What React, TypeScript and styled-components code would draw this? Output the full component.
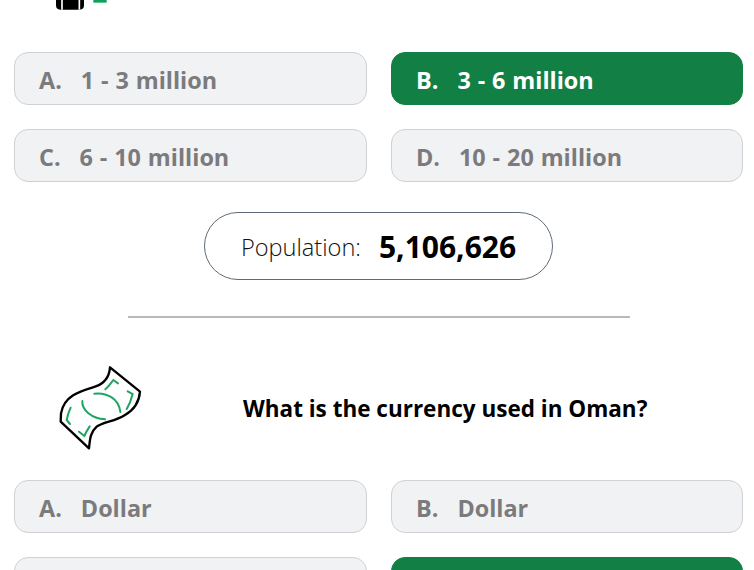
import React from "react";
import styled, { createGlobalStyle } from "styled-components";

const GlobalStyle = createGlobalStyle`
  html, body {
    margin: 0;
    padding: 0;
    background: #fff;
    height: 570px;
    overflow: hidden;
    font-family: "Open Sans", "Noto Sans", sans-serif;
  }
`;

const Page = styled.div`
  height: 648px;
  margin-top: -78px;
  padding: 0 11px 0 14px;
  overflow: hidden;
`;

const Header = styled.div`
  display: flex;
  align-items: center;
  gap: 83px;
  height: 116px;
  padding-left: 26px;
  margin-bottom: 14px;
`;

const IconBox = styled.svg`
  width: 120px;
  height: 116px;
  flex: none;
`;

const Question = styled.h2`
  margin: 0;
  color: #000;
  font-size: 22.5px;
  font-weight: 700;
`;

const Options = styled.div`
  display: grid;
  grid-template-columns: 353px 352px;
  gap: 24px;
`;

const Option = styled.div<{ $selected?: boolean }>`
  display: flex;
  align-items: center;
  gap: 19px;
  box-sizing: border-box;
  height: 53px;
  padding: 2px 0 0 24px;
  border-radius: 14px;
  border: 1px solid ${(p) => (p.$selected ? "#128045" : "#d0d1d4")};
  background: ${(p) => (p.$selected ? "#128045" : "#f1f2f4")};
  color: ${(p) => (p.$selected ? "#fff" : "#7b7b7d")};
  font-size: 23.4px;
  font-weight: 700;
  word-spacing: 0.8px;
`;

const Pill = styled.div`
  display: flex;
  align-items: center;
  justify-content: center;
  gap: 18px;
  box-sizing: border-box;
  width: 349px;
  height: 68px;
  margin: 30px auto 0;
  padding-top: 1px;
  border: 1px solid #5f6b76;
  border-radius: 34px;
`;

const PillLabel = styled.span`
  font-size: 23.6px;
  font-weight: 300;
  color: #111;
`;

const PillValue = styled.span`
  font-size: 30px;
  font-weight: 700;
  color: #000;
`;

const Divider = styled.hr`
  width: 502px;
  height: 2px;
  margin: 36px auto 32px;
  border: 0;
  background: #b9b9b9;
`;

function TopIcon() {
  return (
    <IconBox viewBox="0 0 360 348">
      <path d="M48 200h84v50q0 13-13 13H61q-13 0-13-13z" fill="#000" />
      <path d="M66 225v38M118 225v38" stroke="#fff" strokeWidth="5" />
      <rect x="160" y="200" width="40" height="42" fill="#12a05a" />
    </IconBox>
  );
}

function MoneyIcon() {
  return (
    <IconBox viewBox="0 0 360 348">
      <path
        d="M210 52C208 80 195 100 165 110C125 122 72 135 63 190L62 215L147 295C150 268 150 248 170 230C190 215 225 215 255 195C285 178 298 150 300 125Z"
        fill="#fff"
        stroke="#000"
        strokeWidth="7"
        strokeLinejoin="round"
      />
      <g fill="none" stroke="#1fa463" strokeWidth="6" strokeLinecap="round">
        <path d="M196 118C206 110 212 100 220 90L234 100" />
        <path d="M263 124L278 132C274 148 268 164 260 177" />
        <path d="M163 131C200 127 236 145 241 186" />
        <path d="M127 153C125 180 155 205 195 208" />
        <path d="M92 173C86 186 82 198 80 210L90 222" />
        <path d="M117 245L133 258C138 246 143 238 149 229" />
      </g>
    </IconBox>
  );
}

type Item = { label?: string; text?: string; selected?: boolean };

const first: Item[] = [
  { label: "A.", text: "1 - 3 million" },
  { label: "B.", text: "3 - 6 million", selected: true },
  { label: "C.", text: "6 - 10 million" },
  { label: "D.", text: "10 - 20 million" },
];

// the last row runs off the bottom of the frame, only its top edge shows
const second: Item[] = [
  { label: "A.", text: "Dollar" },
  { label: "B.", text: "Dollar" },
  {},
  { selected: true },
];

function OptionGrid({ items }: { items: Item[] }) {
  return (
    <Options>
      {items.map((item, i) => (
        <Option key={i} $selected={item.selected}>
          <span>{item.label}</span>
          <span>{item.text}</span>
        </Option>
      ))}
    </Options>
  );
}

export default function App() {
  return (
    <Page>
      <GlobalStyle />
      <Header>
        <TopIcon />
      </Header>
      <OptionGrid items={first} />
      <Pill>
        <PillLabel>Population:</PillLabel>
        <PillValue>5,106,626</PillValue>
      </Pill>
      <Divider />
      <Header>
        <MoneyIcon />
        <Question>What is the currency used in Oman?</Question>
      </Header>
      <OptionGrid items={second} />
    </Page>
  );
}
